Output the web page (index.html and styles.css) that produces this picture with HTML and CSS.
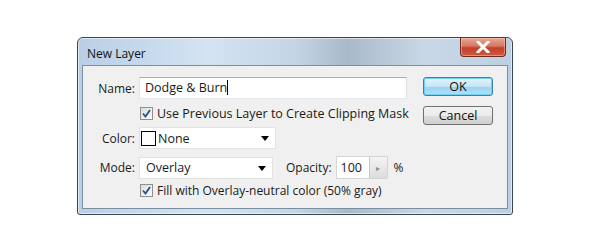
FILE: index.html
```html
<!DOCTYPE html>
<html lang="en">
<head>
    <meta charset="UTF-8">
    <title>New Layer</title>
    <link rel="stylesheet" href="styles.css">
</head>
<body>

<div class="window">
    <div class="titlebar">
        <span class="title">New Layer</span>
        <div class="close">
            <svg width="14" height="12" viewBox="0 0 14 12">
                <path d="M2 1 L12 11 M12 1 L2 11" stroke="#fff" stroke-width="3" stroke-linecap="square"/>
            </svg>
        </div>
    </div>

    <div class="client">
        <div class="form">
            <div class="row row-name">
                <label class="lbl">Name:</label>
                <div class="textbox">Dodge &amp; Burn<span class="caret"></span></div>
            </div>

            <div class="row row-check">
                <span class="lbl"></span>
                <span class="checkbox">
                    <svg width="9" height="9" viewBox="0 0 9 9"><path d="M1 4.5 L3.5 7.5 L8 1" fill="none" stroke="#2a4f8f" stroke-width="1.8"/></svg>
                </span>
                <span class="check-text">Use Previous Layer to Create Clipping Mask</span>
            </div>

            <div class="row row-color">
                <label class="lbl">Color:</label>
                <div class="select select-color">
                    <span class="swatch"></span>
                    <span class="select-text">None</span>
                    <span class="arrow"></span>
                </div>
            </div>

            <div class="row row-mode">
                <label class="lbl">Mode:</label>
                <div class="select select-mode">
                    <span class="select-text">Overlay</span>
                    <span class="arrow"></span>
                </div>
                <label class="opacity-lbl">Opacity:</label>
                <div class="spin">
                    <span class="spin-value">100</span>
                    <span class="spin-btn">&#9656;</span>
                </div>
                <span class="percent">%</span>
            </div>

            <div class="row row-check2">
                <span class="lbl"></span>
                <span class="checkbox">
                    <svg width="9" height="9" viewBox="0 0 9 9"><path d="M1 4.5 L3.5 7.5 L8 1" fill="none" stroke="#2a4f8f" stroke-width="1.8"/></svg>
                </span>
                <span class="check-text">Fill with Overlay-neutral color (50% gray)</span>
            </div>
        </div>

        <div class="buttons">
            <button class="btn btn-default">OK</button>
            <button class="btn">Cancel</button>
        </div>
    </div>
</div>

</body>
</html>
```

FILE: styles.css
```css
body {
    margin: 0;
    background: #ffffff;
    font-family: "Open Sans", "Noto Sans", sans-serif;
    font-size: 12px;
    color: #1a1a1a;
    padding: 37px 0 0 77px;
}
.window {
    width: 426px;
    height: 171px;
    border: 1px solid #3a4552;
    border-radius: 6px 6px 3px 3px;
    background: linear-gradient(90deg, #b9cfe6 0%, #d3e3f2 30%, #c4d5e6 50%, #a8b9ca 62%, #c9d8e6 80%, #bccfe2 100%);
    padding: 0 4px 5px 4px;
    box-sizing: content-box;
    display: flex;
    flex-direction: column;
    box-shadow: inset 0 0 0 1px rgba(255, 255, 255, 0.55);
}
.titlebar {
    height: 27px;
    display: flex;
    align-items: flex-start;
    justify-content: space-between;
}
.title {
    margin: 7px 0 0 5px;
    font-size: 12px;
    color: #111;
}
.close {
    width: 44px;
    height: 18px;
    margin-right: 2px;
    border: 1px solid #6f2a1f;
    border-top: none;
    border-radius: 0 0 4px 4px;
    background: linear-gradient(#e7a797 0%, #d7775f 45%, #c0402a 55%, #cf5a3d 100%);
    display: flex;
    align-items: center;
    justify-content: center;
    box-shadow: inset 0 0 0 1px rgba(255, 200, 180, 0.5);
}
.client {
    flex: 1;
    background: #f0f0f0;
    border: 1px solid #7b8ea2;
    display: flex;
    justify-content: space-between;
    padding: 11px 14px 0 0;
}
.form {
    display: flex;
    flex-direction: column;
}
.row {
    display: flex;
    align-items: center;
}
.lbl {
    width: 52px;
    text-align: right;
    margin-right: 4px;
}
.row-name {
    height: 22px;
}
.textbox {
    width: 261px;
    height: 20px;
    background: #fff;
    border: 1px solid #abadb3;
    border-color: #abadb3 #dbdfe6 #e3e9ef #e2e3ea;
    padding-left: 5px;
    line-height: 20px;
    font-size: 12.5px;
}
.caret {
    display: inline-block;
    width: 1px;
    height: 15px;
    background: #000;
    vertical-align: -3px;
}
.row-check {
    height: 28px;
}
.row-check2 {
    height: 22px;
}
.checkbox {
    width: 11px;
    height: 11px;
    border: 1px solid #8f8f8f;
    background: linear-gradient(135deg, #dcdcdc, #fcfcfc);
    display: flex;
    align-items: center;
    justify-content: center;
    margin-left: 1px;
    margin-right: 4px;
}
.check-text {
    font-size: 12.5px;
}
.row-check2 .check-text {
    font-size: 12px;
}
.row-color {
    height: 22px;
}
.select {
    height: 20px;
    background: #fff;
    border: 1px solid #e2e2e2;
    display: flex;
    align-items: center;
    position: relative;
    font-size: 12.5px;
}
.select-color {
    width: 135px;
}
.select-mode {
    width: 132px;
}
.swatch {
    width: 13px;
    height: 13px;
    border: 1px solid #000;
    background: #fff;
    margin: 0 2px 0 1px;
}
.select-mode .select-text {
    padding-left: 6px;
}
.arrow {
    position: absolute;
    right: 6px;
    top: 8px;
    border-left: 4px solid transparent;
    border-right: 4px solid transparent;
    border-top: 5px solid #000;
}
.row-mode {
    height: 23px;
    margin-top: 7px;
}
.opacity-lbl {
    margin-left: 13px;
    margin-right: 4px;
}
.spin {
    display: flex;
    height: 21px;
    border: 1px solid #d5d5d5;
    background: #fff;
}
.spin-value {
    width: 28px;
    padding-left: 4px;
    line-height: 21px;
    font-size: 12.5px;
}
.spin-btn {
    width: 17px;
    border-left: 1px solid #c8c8c8;
    background: linear-gradient(#f4f4f4, #dcdcdc);
    color: #8a8a8a;
    font-size: 8px;
    line-height: 21px;
    text-align: center;
}
.percent {
    margin-left: 6px;
}
.buttons {
    display: flex;
    flex-direction: column;
    gap: 10px;
}
.btn {
    width: 70px;
    height: 19px;
    font-family: inherit;
    font-size: 12.5px;
    color: #111;
    border: 1px solid #707070;
    border-radius: 3px;
    background: linear-gradient(#f2f2f2 0%, #ebebeb 50%, #dddddd 51%, #cfcfcf 100%);
    padding: 0;
    line-height: 16px;
}
.btn-default {
    border-color: #3c7fb1;
    background: linear-gradient(#e5f4fc 0%, #c4e5f6 50%, #98d1ef 51%, #b3e0f9 100%);
    box-shadow: inset 0 0 0 1px #6fd0f5;
}
```
